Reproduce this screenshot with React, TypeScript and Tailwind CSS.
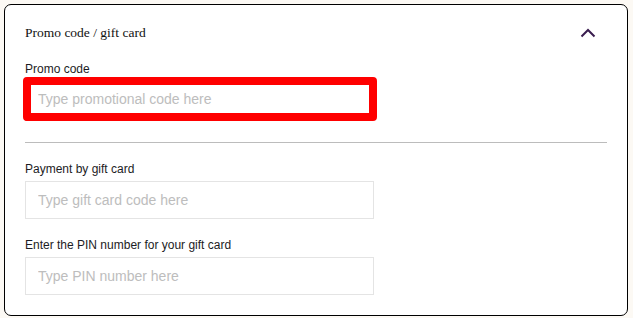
import { useState } from 'react';

const sans = { fontFamily: '"Liberation Sans", Arial, sans-serif' };

function Field({ label, placeholder, className }: { label: string; placeholder: string; className?: string }) {
    return (
        <div className={className}>
            <label className="block text-[12px] leading-[14px] text-[#1c1c24]">{label}</label>
            <input
                type="text"
                placeholder={placeholder}
                className="mt-[5px] block h-[38px] w-[349px] border border-[#e4e4e4] bg-white px-[12px] text-[14px] text-[#222] outline-none placeholder:text-[#bdbdbd]"
            />
        </div>
    );
}

export default function App() {
    const [open, setOpen] = useState(true);
    const [promo, setPromo] = useState('');

    return (
        <div className="h-[318px] w-[633px] bg-[#fcf9f4] pl-[4px] pt-[4px]" style={sans}>
            <div className="h-[312px] w-[624px] rounded-[7px] border border-black bg-white px-[20px]">
                <div className="flex h-[56px] items-center justify-between">
                    <h3
                        className="text-[13.5px] leading-none text-[#111]"
                        style={{ fontFamily: '"Liberation Serif", "Times New Roman", serif' }}
                    >
                        Promo code / gift card
                    </h3>
                    <button onClick={() => setOpen(!open)} className="mr-[11px] p-0">
                        <svg width="16" height="10" viewBox="0 0 16 10" fill="none">
                            <polyline
                                points={open ? '1.5,8.5 8,2 14.5,8.5' : '1.5,1.5 8,8 14.5,1.5'}
                                stroke="#3a1d4f"
                                strokeWidth="2"
                            />
                        </svg>
                    </button>
                </div>

                <div className="mt-[1px]">
                    <label className="block text-[12px] leading-[14px] text-[#1c1c24]">Promo code</label>
                    <div className="relative mt-[3px] w-[350px]">
                        <input
                            type="text"
                            value={promo}
                            onChange={(e) => setPromo(e.target.value)}
                            placeholder="Type promotional code here"
                            className="block h-[40px] w-[350px] bg-white px-[13px] text-[14px] text-[#222] outline-none placeholder:text-[#bdbdbd]"
                        />
                        {/* highlight box */}
                        <div className="pointer-events-none absolute -top-[2px] -right-[2px] -bottom-[2px] -left-[2px] rounded-[4px] border-[8px] border-[#ff0000]" />
                    </div>
                </div>

                <div className="mt-[23px] h-px w-[582px] bg-[#bcbcbc]" />

                <Field className="mt-[19px]" label="Payment by gift card" placeholder="Type gift card code here" />
                <Field className="mt-[19px]" label="Enter the PIN number for your gift card" placeholder="Type PIN number here" />
            </div>
        </div>
    );
}
